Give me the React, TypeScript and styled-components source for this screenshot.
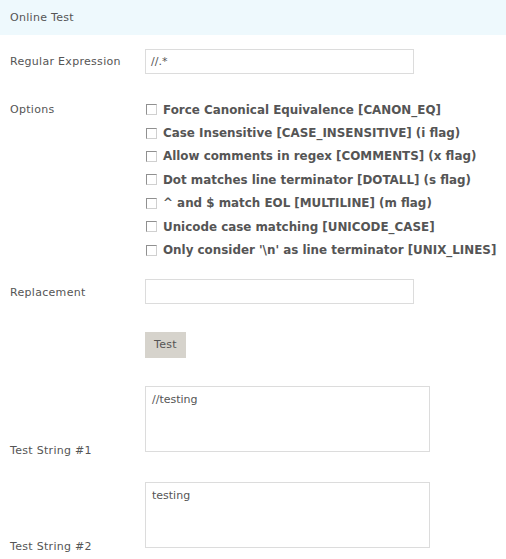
import React from "react";
import styled, { createGlobalStyle } from "styled-components";

const Global = createGlobalStyle`
  html, body { margin: 0; padding: 0; background: #fff; }
  body { font-family: "DejaVu Sans", Verdana, sans-serif; color: #555; }
`;

const Page = styled.div`
  width: 506px;
  height: 559px;
  overflow: hidden;
`;

const Header = styled.div`
  height: 35px;
  background: #eef9fd;
  display: flex;
  align-items: center;
  padding-left: 10px;
  font-size: 11px;
  letter-spacing: 0.3px;
  color: #555;
`;

const Form = styled.div`
  display: flex;
  flex-direction: column;
  padding-left: 10px;
`;

const Row = styled.div<{ $top: number; $align?: string }>`
  display: flex;
  align-items: ${(p) => p.$align || "center"};
  margin-top: ${(p) => p.$top}px;
`;

const Label = styled.div<{ $drop?: number; $lift?: number }>`
  width: 135px;
  flex: none;
  font-size: 11px;
  letter-spacing: 0.3px;
  line-height: 14px;
  color: #555;
  margin-bottom: ${(p) => -(p.$drop || 0)}px;
  margin-top: ${(p) => p.$lift || 0}px;
`;

const TextInput = styled.div`
  box-sizing: border-box;
  width: 269px;
  height: 25px;
  border: 1px solid #dcdcdc;
  padding: 0 5px;
  font-size: 11px;
  line-height: 23px;
  color: #555;
`;

const Options = styled.div`
  display: flex;
  flex-direction: column;
`;

const Option = styled.div`
  height: 23.4px;
  display: flex;
  align-items: center;
  gap: 6px;
  font-size: 11.9px;
  font-weight: bold;
  color: #555;
  white-space: nowrap;
`;

const Box = styled.span`
  box-sizing: border-box;
  width: 11px;
  height: 11px;
  border: 1px solid #909090;
  border-right-color: #d0d0d0;
  border-bottom-color: #d0d0d0;
  background: #fff;
  margin-left: 1px;
  flex: none;
`;

const Button = styled.div`
  box-sizing: border-box;
  width: 41px;
  height: 26px;
  background: #d6d3cc;
  display: flex;
  align-items: center;
  justify-content: center;
  font-size: 11px;
  letter-spacing: 0.3px;
  color: #555;
`;

const Area = styled.div`
  box-sizing: border-box;
  width: 285px;
  height: 66px;
  border: 1px solid #dcdcdc;
  padding: 6px 6px;
  font-size: 11px;
  line-height: 14px;
  color: #555;
`;

const options = [
  "Force Canonical Equivalence [CANON_EQ]",
  "Case Insensitive [CASE_INSENSITIVE] (i flag)",
  "Allow comments in regex [COMMENTS] (x flag)",
  "Dot matches line terminator [DOTALL] (s flag)",
  "^ and $ match EOL [MULTILINE] (m flag)",
  "Unicode case matching [UNICODE_CASE]",
  "Only consider '\\n' as line terminator [UNIX_LINES]",
];

export default function App() {
  return (
    <Page>
      <Global />
      <Header>Online Test</Header>
      <Form>
        <Row $top={14}>
          <Label>Regular Expression</Label>
          <TextInput>//.*</TextInput>
        </Row>
        <Row $top={24} $align="flex-start">
          <Label $lift={5}>Options</Label>
          <Options>
            {options.map((o) => (
              <Option key={o}>
                <Box />
                {o}
              </Option>
            ))}
          </Options>
        </Row>
        <Row $top={17}>
          <Label $lift={3}>Replacement</Label>
          <TextInput />
        </Row>
        <Row $top={28}>
          <Label />
          <Button>Test</Button>
        </Row>
        <Row $top={28} $align="flex-end">
          <Label $drop={6}>Test String #1</Label>
          <Area>//testing</Area>
        </Row>
        <Row $top={30} $align="flex-end">
          <Label $drop={6}>Test String #2</Label>
          <Area>testing</Area>
        </Row>
      </Form>
    </Page>
  );
}
